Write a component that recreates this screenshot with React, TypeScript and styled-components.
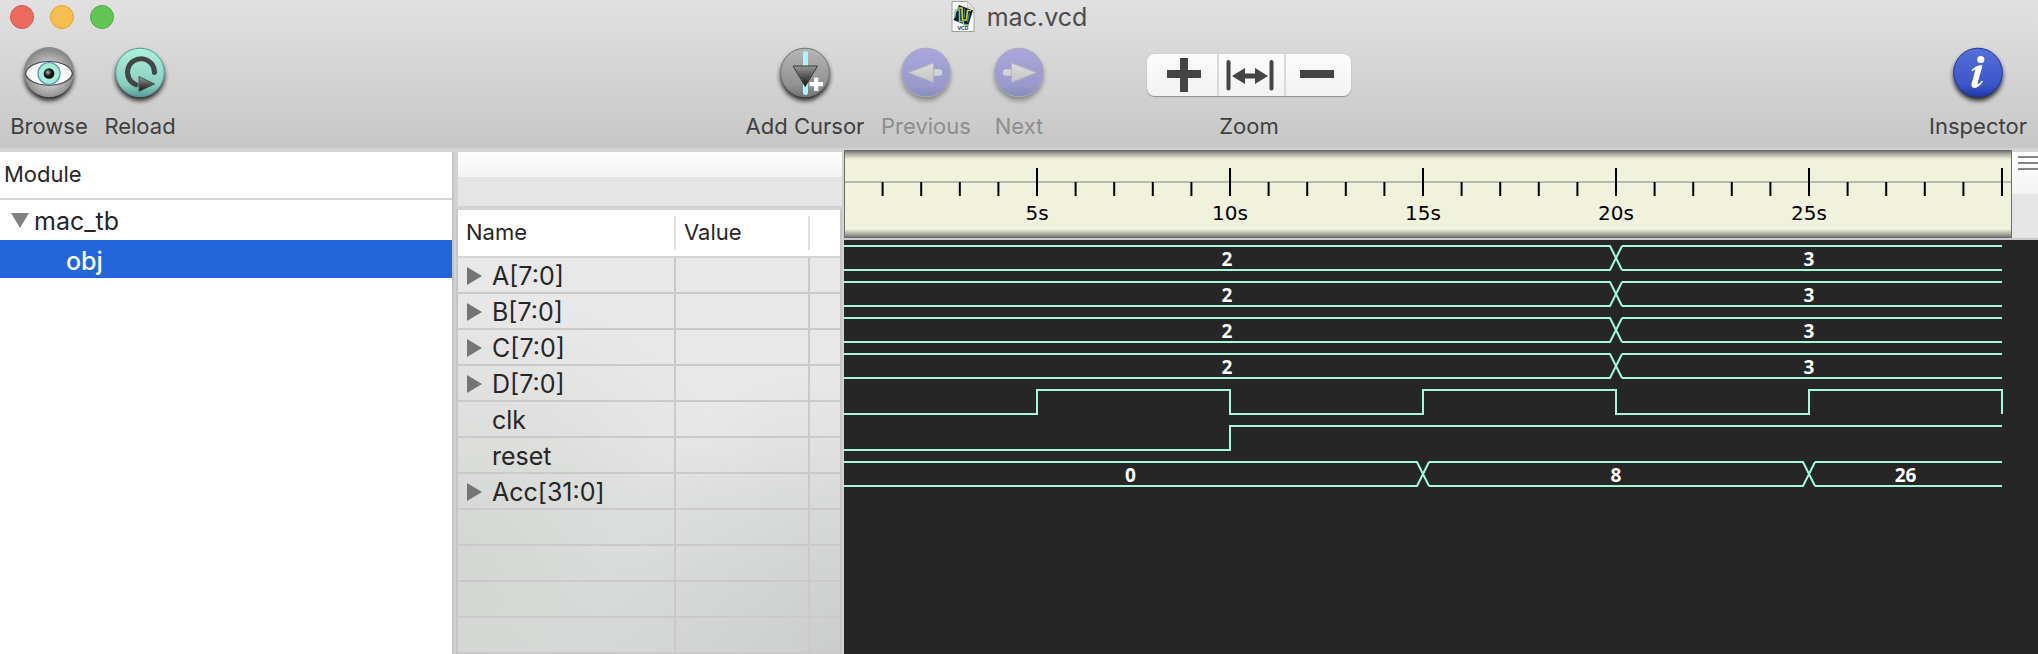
import React from "react";
import styled, { createGlobalStyle } from "styled-components";

const GlobalStyle = createGlobalStyle`
  * { box-sizing: border-box; }
  body {
    margin: 0;
    font-family: Inter, "Liberation Sans", sans-serif;
    background: #d3d3d3;
    color: #262626;
  }
  button { font: inherit; color: inherit; border: 0; padding: 0; background: none; }
  svg { display: block; }
`;

const SECOND = 193 / 5;
const ROW = 36;

const Window = styled.div`
  display: flex;
  flex-direction: column;
  min-height: 100vh;
`;

const Chrome = styled.header`
  height: 150px;
  background: linear-gradient(#e1e1e1, #c7c7c7);
  border-bottom: 2px solid #d3d3d3;
`;

const TitleBar = styled.div`
  display: grid;
  grid-template-columns: 1fr auto 1fr;
  height: 32px;
  padding: 0 10px;
`;

const Lights = styled.div`
  display: flex;
  align-items: center;
  gap: 16px;
`;

const Light = styled.button<{ $fill: string; $edge: string }>`
  width: 24px;
  height: 24px;
  border-radius: 50%;
  background: ${(p) => p.$fill};
  border: 1px solid ${(p) => p.$edge};
`;

const Title = styled.h1`
  display: flex;
  align-items: center;
  gap: 12px;
  margin: 0;
  font-size: 25px;
  line-height: 34px;
  font-weight: 400;
  color: #4c4c4c;
`;

const Toolbar = styled.div`
  display: flex;
  justify-content: space-between;
  padding: 12px 11px 0;
`;

const ToolGroup = styled.div<{ $end?: number }>`
  display: flex;
  gap: 17px;
  padding-right: ${(p) => p.$end ?? 0}px;
`;

const Tool = styled.button<{ $width: number }>`
  display: flex;
  flex-direction: column;
  align-items: center;
  width: ${(p) => p.$width}px;
  font-size: 22px;
  line-height: 28px;
  white-space: nowrap;
  color: #404040;
  &:disabled { color: #8e8e8e; }
  svg { height: 68px; flex: none; }
`;

const ZoomTool = styled.div`
  display: flex;
  flex-direction: column;
  align-items: center;
  margin-left: 79px;
  font-size: 22px;
  line-height: 28px;
  color: #404040;
`;

const Segments = styled.div`
  display: flex;
  margin: 10px 0 16px;
  border-radius: 8px;
  background: linear-gradient(#fcfcfc, #f2f2f2);
  box-shadow: 0 1px 1px #8f8f8f, 0 0 1px #a8a8a8;
`;

const Segment = styled.button<{ $width: number }>`
  display: flex;
  align-items: center;
  justify-content: center;
  width: ${(p) => p.$width}px;
  height: 42px;
  padding-left: 4px;
  & + & {
    padding: 0 4px 0 0;
    border-left: 2px solid #d9d9d9;
  }
`;

const Body = styled.main`
  flex: 1;
  display: grid;
  grid-template-columns: 454px 386px minmax(0, 1fr);
  column-gap: 2px;
`;

const Modules = styled.nav`
  margin-top: 2px;
  border-right: 2px solid #c3c3c3;
  background: #fff;
`;

const ModuleHeader = styled.h2`
  margin: 0;
  height: 48px;
  padding: 0 4px;
  border-bottom: 2px solid #d4d4d4;
  font-size: 22px;
  line-height: 44px;
  font-weight: 400;
`;

const Tree = styled.ul`
  list-style: none;
  margin: 0;
  padding: 2px 0 0;
`;

const TreeRow = styled.button<{ $selected?: boolean }>`
  display: flex;
  align-items: center;
  gap: 5px;
  width: 100%;
  height: 38px;
  padding-left: ${(p) => (p.$selected ? 66 : 11)}px;
  padding-top: ${(p) => (p.$selected ? 3 : 0)}px;
  text-align: left;
  font-size: 25px;
  line-height: 34px;
  font-weight: ${(p) => (p.$selected ? 500 : 400)};
  color: ${(p) => (p.$selected ? "#fff" : "inherit")};
  background: ${(p) => (p.$selected ? "#2265da" : "none")};
`;

const Signals = styled.section`
  display: flex;
  flex-direction: column;
`;

const SearchStrip = styled.div`
  height: 54px;
  margin: 2px 0 2px 2px;
  background: linear-gradient(#fff, #f3f3f3 25px, #e5e5e5 25px);
`;

const SignalFrame = styled.div`
  flex: 1;
  border: 2px solid #c6c6c6;
  border-top-color: #d3d3d3;
  border-bottom: 0;
  background:
    radial-gradient(ellipse at 100% 100%, #cccecc 0, #cccecc00 45%),
    radial-gradient(ellipse at 0% 80%, #d3d6d2 0, #d3d6d200 55%),
    linear-gradient(#e8e8e8 50%, #e0e3e2 75%, #d6d9d8);
`;

const SignalTable = styled.table`
  width: 100%;
  table-layout: fixed;
  border-collapse: separate;
  border-spacing: 0;
`;

const HeadCell = styled.th`
  height: 48px;
  padding: 0 8px 2px;
  border-bottom: 2px solid #d4d4d4;
  background: linear-gradient(#e0e0e0, #e0e0e0) right 6px / 2px 34px no-repeat #fff;
  font-size: 22px;
  line-height: 28px;
  font-weight: 400;
  text-align: left;
  &:last-child { background: #fff; }
`;

const Cell = styled.td`
  height: 36px;
  padding: 0 9px;
  border-right: 2px solid #cacaca;
  border-bottom: 2px solid #cacaca;
  &:last-child { border-right: 0; }
`;

const SignalName = styled.div`
  display: grid;
  grid-template-columns: 15px auto;
  column-gap: 10px;
  align-items: center;
  justify-content: start;
  padding-top: 2px;
  font-size: 25px;
  line-height: 32px;
`;

const Scope = styled.section`
  display: flex;
  flex-direction: column;
  min-width: 0;
`;

const RulerRow = styled.div`
  display: flex;
  height: 90px;
  padding-bottom: 2px;
  background: #c9c9c9;
`;

const Ruler = styled.div`
  flex: 1;
  min-width: 0;
  overflow: hidden;
  border: 1px solid #6c6c68;
  background:
    linear-gradient(#777772, #a9a9a0 3px, #f0f2dc00 8px),
    linear-gradient(0deg, #777772, #a9a9a0 3px, #f0f2dc00 8px),
    linear-gradient(#b8b8b4, #b8b8b4) 0 30px / 100% 2px no-repeat,
    #f0f2dc;
`;

const Corner = styled.button`
  display: flex;
  flex-direction: column;
  align-items: flex-end;
  gap: 4px;
  width: 26px;
  padding-top: 4px;
  border-top: 2px solid #d3d3d3;
  background: linear-gradient(#fff, #f3f3f3 42px, #e5e5e5 42px);
`;

const GripLine = styled.span`
  width: 20px;
  height: 2px;
  background: #858585;
`;

const Waves = styled.div`
  flex: 1;
  overflow: hidden;
  background: #262626;
`;

const WaveLine = styled.path`
  fill: none;
  stroke: #a3fadb;
  stroke-width: 2px;
`;

const ValueText = styled.text`
  fill: #fff;
  font: bold 19px "Noto Sans", sans-serif;
  text-anchor: middle;
`;

const TickText = styled.text`
  fill: #000;
  font: 20px "DejaVu Sans", sans-serif;
  text-anchor: middle;
`;

/* One toolbar disc: a shadow below, the shaded ball, then its symbol. */
const Disc = ({ id, top, bottom, edge, faded, children }: {
  id: string; top: string; bottom: string; edge: string; faded?: boolean; children: React.ReactNode;
}) => (
  <svg width="64" height="68" viewBox="0 0 64 68" aria-hidden="true">
    <defs>
      <linearGradient id={id} x1="0" y1="0" x2="0" y2="1">
        <stop offset="0" stopColor={top} />
        <stop offset="0.75" stopColor={bottom} />
        <stop offset="1" stopColor={edge} />
      </linearGradient>
      <filter id={`${id}-s`} x="-30%" y="-30%" width="160%" height="160%">
        <feGaussianBlur stdDeviation="2.4" />
      </filter>
      <linearGradient id={`${id}-a`} x1="0" y1="0" x2="0" y2="1">
        <stop offset="0" stopColor={faded ? "#ddd" : "#999"} />
        <stop offset="1" stopColor={faded ? "#c4c4c4" : "#111"} />
      </linearGradient>
    </defs>
    <circle cx="32" cy="32" r="24.5" fill="#000" opacity={faded ? 0.35 : 0.85} filter={`url(#${id}-s)`} />
    <circle cx="32" cy="28.5" r="24.3" fill={`url(#${id})`} stroke={faded ? "#aaaab8" : edge} strokeWidth="1" />
    {children}
  </svg>
);

const BrowseIcon = () => (
  <Disc id="browse" top="#8c8c8c" bottom="#a6a6a6" edge="#6c6c6c">
    <defs>
      <radialGradient id="ball" cx="0.5" cy="0.55" r="0.5">
        <stop offset="0.5" stopColor="#c0c0c0" />
        <stop offset="1" stopColor="#8a8a8a" />
      </radialGradient>
      <radialGradient id="pupil" cx="0.4" cy="0.4" r="0.6">
        <stop offset="0" stopColor="#bbb" />
        <stop offset="0.5" stopColor="#222" />
        <stop offset="1" stopColor="#000" />
      </radialGradient>
    </defs>
    <circle cx="32" cy="28" r="25" fill="url(#ball)" />
    <path d="M8.5 29.5C12 13.500 52 13.500 55.500 29.500C52 45 12 45 8.500 29.500Z" fill="#fafafa" stroke="#4a4a4a" strokeWidth="1.200" />
    <circle cx="32" cy="29.500" r="11" fill="#a5eed5" stroke="#5b93b8" strokeWidth="1.200" />
    <circle cx="32" cy="29.500" r="5.300" fill="url(#pupil)" />
  </Disc>
);

const ReloadIcon = () => (
  <Disc id="reload" top="#aef2db" bottom="#88cfc0" edge="#569b97">
    <path d="M46.500 28.500A13.500 13.500 0 1 0 28 40.800" fill="none" stroke="#454545" strokeWidth="5" strokeLinecap="round" />
    <path d="M31 32.500L46.500 40L31 47.500Z" fill="url(#reload-a)" stroke="#3f5d57" strokeWidth="1" />
  </Disc>
);

const CursorIcon = () => (
  <Disc id="cursor" top="#b6b6b6" bottom="#929292" edge="#757575">
    <path d="M32.500 9.500V48.500" stroke="#a9f6fa" strokeWidth="5" strokeLinecap="round" />
    <path d="M20 22H44.500L32.250 42.500Z" fill="url(#cursor-a)" stroke="#3a3a3a" strokeWidth="1" />
    <path d="M43.200 33.500V47M36.500 40.200H50" stroke="#fff" strokeWidth="4.200" />
  </Disc>
);

const ArrowIcon = ({ id, flip }: { id: string; flip?: boolean }) => (
  <Disc id={id} top="#aaa6dc" bottom="#9b9acb" edge="#838dba" faded>
    <g transform={flip ? "translate(64 0) scale(-1 1)" : undefined}>
      <path d="M40 28.500H45" stroke="#d4d4d4" strokeWidth="6.500" strokeLinecap="round" />
      <path d="M14.500 28.500L39.500 19V38.500Z" fill={`url(#${id}-a)`} stroke="#b4b4b8" strokeWidth="1" />
    </g>
  </Disc>
);

const InfoIcon = () => (
  <Disc id="info" top="#5570d6" bottom="#3c56cb" edge="#2037a8">
    <circle cx="34.800" cy="15.500" r="3.600" fill="#fff" />
    <path d="M25.500 26.500C28 23 33 20.500 36.500 21.500L31.800 38.500C31.200 41 32.500 40.500 36 36.500L37 37.500C34 42 30.500 44.500 27.500 43.800C25.200 43.200 25.200 41 25.800 38.800L29.200 26.500C29.500 24.800 28.500 25.200 26.200 27.500Z" fill="#fff" />
  </Disc>
);

const DocIcon = () => (
  <svg width="24" height="32" viewBox="0 0 24 32" aria-hidden="true">
    <path d="M1 .5H16.500L23 7V30.500H1Z" fill="#fbfbfb" stroke="#a0a0a0" />
    <path d="M8 4L22 9.500L17 25L2.500 19Z" fill="#0a1c2a" />
    <path d="M16.500 .5V7H23Z" fill="#e8e8e8" stroke="#b5b5b5" strokeWidth=".7" />
    <path d="M3.500 17L4.500 9H8.500V20.500H12L13 24H17" fill="none" stroke="#6fd0a4" strokeWidth="1.600" />
    <path d="M6 7H11L11.500 19H15.500L16.500 9.500H20" fill="none" stroke="#d8cf33" strokeWidth="1.700" />
    <path d="M13.500 7.500V17M18.500 12L16.500 21" fill="none" stroke="#3f83a5" strokeWidth="1.200" />
    <text x="12" y="29" textAnchor="middle" fontSize="5" fontWeight="700" fill="#333">VCD</text>
  </svg>
);

const Disclosure = ({ open }: { open?: boolean }) =>
  open ? (
    <svg width="18" height="19" viewBox="0 0 18 19" aria-hidden="true"><path d="M0 1H18L9 16Z" fill="#808080" /></svg>
  ) : (
    <svg width="15" height="18" viewBox="0 0 15 18" aria-hidden="true"><path d="M0 0L15 9L0 18Z" fill="#757575" /></svg>
  );

const END = 30;

type Bus = { name: string; bus: [number, string][] };
type Wire = { name: string; wire: [number, number][]; falls?: boolean };

const operand: [number, string][] = [[0, "2"], [20, "3"]];
const signals: (Bus | Wire)[] = [
  { name: "A[7:0]", bus: operand },
  { name: "B[7:0]", bus: operand },
  { name: "C[7:0]", bus: operand },
  { name: "D[7:0]", bus: operand },
  { name: "clk", wire: [[0, 0], [5, 1], [10, 0], [15, 1], [20, 0], [25, 1]], falls: true },
  { name: "reset", wire: [[0, 0], [10, 1]] },
  { name: "Acc[31:0]", bus: [[0, "0"], [15, "8"], [25, "26"]] },
];

const BusWave = ({ values, y }: { values: [number, string][]; y: number }) => {
  const hi = y + 6;
  const lo = y + 30;
  return (
    <g>
      {values.map(([t, label], i) => {
        const last = i === values.length - 1;
        const from = t * SECOND + (i ? 6 : 0);
        const change = (last ? END : values[i + 1][0]) * SECOND;
        const to = change - 6;
        const tail = last
          ? `M${from} ${hi}H${change}M${from} ${lo}H${change}`
          : `M${from} ${hi}H${to}L${change + 6} ${lo}M${from} ${lo}H${to}L${change + 6} ${hi}`;
        return (
          <React.Fragment key={t}>
            <WaveLine d={tail} />
            <ValueText x={(from + to) / 2} y={y + 26}>{label}</ValueText>
          </React.Fragment>
        );
      })}
    </g>
  );
};

const WireWave = ({ edges, y, falls }: { edges: [number, number][]; y: number; falls?: boolean }) => {
  const level = (v: number) => y + (v ? 6 : 30);
  const path = edges.map(([t, v], i) => (i ? `H${t * SECOND}V${level(v)}` : `M0 ${level(v)}`)).join("");
  return <WaveLine d={`${path}H${END * SECOND}${falls ? `V${level(0)}` : ""}`} />;
};

const ticks = Array.from({ length: END }, (_, i) => i + 1);

export default function App() {
  return (
    <Window>
      <GlobalStyle />
      <Chrome>
        <TitleBar>
          <Lights>
            <Light $fill="#ed6a5f" $edge="#d9574c" aria-label="Close" />
            <Light $fill="#f5bf50" $edge="#dda33c" aria-label="Minimize" />
            <Light $fill="#62c655" $edge="#50ab42" aria-label="Full screen" />
          </Lights>
          <Title><DocIcon />mac.vcd</Title>
        </TitleBar>
        <Toolbar>
          <ToolGroup>
            <Tool $width={76}><BrowseIcon />Browse</Tool>
            <Tool $width={72}><ReloadIcon />Reload</Tool>
          </ToolGroup>
          <ToolGroup $end={9}>
            <Tool $width={120}><CursorIcon />Add Cursor</Tool>
            <Tool $width={88} disabled><ArrowIcon id="prev" />Previous</Tool>
            <Tool $width={64} disabled><ArrowIcon id="next" flip />Next</Tool>
            <ZoomTool role="group" aria-labelledby="zoom-label">
              <Segments>
                <Segment $width={70} aria-label="Zoom in">
                  <svg width="34" height="34" viewBox="0 0 34 34"><path d="M17 0V34M0 16H34" stroke="#444" strokeWidth="8" /></svg>
                </Segment>
                <Segment $width={67} aria-label="Zoom to fit">
                  <svg width="48" height="32" viewBox="0 0 48 32">
                    <path d="M2.500 3V29.500M45.500 3V29.500" stroke="#444" strokeWidth="4" strokeLinecap="round" />
                    <path d="M6 17L19 9V14.500H29V9L42 17L29 25V19.500H19V25Z" fill="#444" />
                  </svg>
                </Segment>
                <Segment $width={67} aria-label="Zoom out">
                  <svg width="34" height="34" viewBox="0 0 34 34"><path d="M0 16H34" stroke="#444" strokeWidth="8" /></svg>
                </Segment>
              </Segments>
              <span id="zoom-label">Zoom</span>
            </ZoomTool>
          </ToolGroup>
          <ToolGroup>
            <Tool $width={98}><InfoIcon />Inspector</Tool>
          </ToolGroup>
        </Toolbar>
      </Chrome>
      <Body>
        <Modules aria-label="Modules">
          <ModuleHeader>Module</ModuleHeader>
          <Tree>
            <li>
              <TreeRow><Disclosure open />mac_tb</TreeRow>
              <TreeRow $selected>obj</TreeRow>
            </li>
          </Tree>
        </Modules>
        <Signals>
          <SearchStrip />
          <SignalFrame>
            <SignalTable>
              <colgroup><col width="218" /><col width="134" /><col /></colgroup>
              <thead>
                <tr><HeadCell>Name</HeadCell><HeadCell>Value</HeadCell><HeadCell /></tr>
              </thead>
              <tbody>
                {Array.from({ length: 11 }, (_, i) => {
                  const s = signals[i];
                  return (
                    <tr key={i}>
                      <Cell>
                        {s && <SignalName>{"bus" in s ? <Disclosure /> : <span />}{s.name}</SignalName>}
                      </Cell>
                      <Cell /><Cell />
                    </tr>
                  );
                })}
              </tbody>
            </SignalTable>
          </SignalFrame>
        </Signals>
        <Scope>
          <RulerRow>
            <Ruler>
              <svg width="1166" height="86" viewBox="1 1 1166 86">
                {ticks.map((t) => (
                  <g key={t}>
                    <path d={`M${t * SECOND} ${t % 5 ? 32 : 18}V46`} stroke="#000" strokeWidth="2" />
                    {t % 5 === 0 && t < END && <TickText x={t * SECOND} y="70">{t}s</TickText>}
                  </g>
                ))}
              </svg>
            </Ruler>
            <Corner aria-label="Columns"><GripLine /><GripLine /><GripLine /></Corner>
          </RulerRow>
          <Waves>
            <svg width="1194" height="260" viewBox="0 0 1194 260" role="img" aria-label="Waveforms">
              {signals.map((s, i) =>
                "bus" in s ? (
                  <BusWave key={s.name} values={s.bus} y={i * ROW} />
                ) : (
                  <WireWave key={s.name} edges={s.wire} falls={s.falls} y={i * ROW} />
                )
              )}
            </svg>
          </Waves>
        </Scope>
      </Body>
    </Window>
  );
}
